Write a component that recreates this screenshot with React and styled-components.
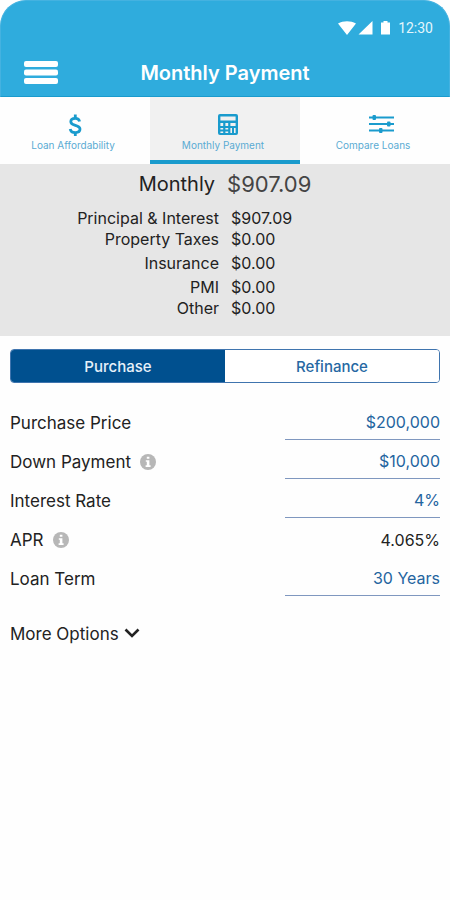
import React, { useState } from "react";
import styled, { createGlobalStyle } from "styled-components";

const GlobalStyle = createGlobalStyle`
  *, *::before, *::after { box-sizing: border-box; }
  body {
    margin: 0;
    background: #fff;
    color: #222;
    font-family: Inter, Roboto, "Liberation Sans", sans-serif;
    font-size: 16px;
  }
  button, input, select { font: inherit; color: inherit; margin: 0; }
`;

const Screen = styled.div`
  min-height: 100vh;
  background: #fefefe;
`;

const Header = styled.header`
  background: #2facdd;
  border: 1px solid #44b2e0;
  border-bottom: 1px solid #1a9bcd;
  border-radius: 26px 26px 0 0;
`;

const StatusBar = styled.div`
  display: flex;
  align-items: center;
  justify-content: flex-end;
  height: 48px;
  padding: 6px 16px 0 0;
  color: #e4f6fc;
  font-family: Roboto, sans-serif;
  font-size: 14px;
`;

const StatusIcons = styled.svg`
  width: 54px;
  height: 16px;
  margin-right: 6px;
  fill: #fff;
`;

const TitleBar = styled.div`
  display: grid;
  grid-template-columns: 48px 1fr 48px;
  align-items: center;
  height: 47px;
  padding: 0 16px;
`;

const MenuButton = styled.button`
  display: flex;
  padding: 0 0 0 7px;
  border: 0;
  background: none;
  color: #fff;
  cursor: pointer;
`;

const Title = styled.h1`
  margin: 0;
  color: #fff;
  font-size: 20px;
  font-weight: 600;
  text-align: center;
`;

const Tabs = styled.nav`
  display: grid;
  grid-template-columns: repeat(3, 1fr);
  height: 67px;
`;

const Tab = styled.button`
  display: flex;
  flex-direction: column;
  align-items: center;
  padding: 16px 4px 0 0;
  border: 0;
  border-bottom: 4px solid ${(p) => (p.$active ? "#1a9bcd" : "transparent")};
  background: ${(p) => (p.$active ? "#f1f1f1" : "#fefefe")};
  color: #5aabd3;
  font-size: 10px;
  line-height: 12px;
  white-space: nowrap;
  cursor: pointer;
`;

const TabIcon = styled.svg`
  width: 48px;
  height: 26px;
  color: #1a9bcd;
`;

const Summary = styled.section`
  padding: 8px 0 18px;
  background: #e6e6e6;
`;

const Total = styled.div`
  display: flex;
  justify-content: center;
  align-items: center;
  gap: 12px;
  height: 24px;
  margin-bottom: 12px;
  font-size: 20px;
`;

const TotalValue = styled.strong`
  color: #444;
  font-size: 22px;
  font-weight: 400;
`;

const Breakdown = styled.dl`
  display: grid;
  grid-template-columns: 1fr 1fr;
  grid-template-rows: 20px 22px 26px 22px 20px;
  align-items: center;
  column-gap: 12px;
  margin: 0;
`;

const Label = styled.dt`
  text-align: right;
`;

const Value = styled.dd`
  margin: 0;
`;

const Form = styled.form`
  padding: 13px 10px 0;
`;

const Segments = styled.div`
  display: grid;
  grid-template-columns: 1fr 1fr;
  height: 34px;
  margin-bottom: 18px;
  overflow: hidden;
  border: 1px solid #3f74ae;
  border-radius: 4px;
`;

const Segment = styled.button`
  border: 0;
  background: ${(p) => (p.$active ? "#00508f" : "#fff")};
  color: ${(p) => (p.$active ? "#e6f1fa" : "#2668a3")};
  font-size: 15px;
  font-weight: 500;
  cursor: pointer;
`;

const Row = styled.div`
  display: flex;
  align-items: center;
  justify-content: space-between;
  height: 39px;
`;

const FieldName = styled.div`
  display: flex;
  align-items: center;
  gap: 9px;
  padding-top: 4px;
  font-size: 17px;
`;

const Info = styled.button`
  display: flex;
  padding: 0;
  border: 0;
  background: none;
  cursor: pointer;
`;

const Field = styled.input`
  width: 36%;
  height: 39px;
  padding: 4px 0 0;
  border: 0;
  border-bottom: 1px solid #7f97bf;
  border-radius: 0;
  outline: 0;
  background: none;
  color: #24649f;
  text-align: right;
`;

const SelectField = styled(Field)`
  appearance: none;
  text-align-last: right;
`;

const Output = styled.output`
  padding-top: 4px;
`;

const More = styled.button`
  display: flex;
  align-items: center;
  gap: 5px;
  margin-top: 28px;
  padding: 0;
  border: 0;
  background: none;
  font-size: 17px;
  cursor: pointer;
`;

function InfoButton({ label }) {
  return (
    <Info type="button" aria-label={label}>
      <svg width="16" height="16" viewBox="0 0 16 16">
        <circle cx="8" cy="8" r="8" fill="#b7b7b7" />
        <path d="M6.8 2.8h2.6v2H6.8zM5.8 6.2h3.6v5h1.2v1.7H5.6v-1.7h1.2V7.8h-1z" fill="#fff" />
      </svg>
    </Info>
  );
}

const drawings = {
  dollar: (
    <g fill="none" stroke="currentColor" strokeWidth="2.8">
      <path d="M30.6 8.6C30.200 6.600 28.600 5.400 26.200 5.400c-2.800 0-4.400 1.400-4.400 3.300 0 4.700 9.200 2.500 9.200 7.400 0 2.300-1.900 3.500-4.600 3.500-2.900 0-4.800-1.300-5.200-3.700" />
      <path d="M26.300 1.500v4M26.300 19.400v3.600" />
    </g>
  ),
  calculator: (
    <g>
      <rect x="19" y="1" width="20" height="21" rx="2" fill="currentColor" />
      <path d="M21.4 3.400h15.200v4.200H21.400zM21.400 10h2.800v3h-2.800zM26.400 10h2.800v3h-2.800zM31.400 10h5.200v3h-5.200zM21.400 15h2.800v1.600h-2.800zM26.400 15h2.800v1.600h-2.800zM21.400 18.400h2.800V20h-2.800zM26.400 18.400h2.800V20h-2.800zM31.400 15H33v5h-1.600zM35 15h1.600v5H35z" fill="#f1f1f1" />
    </g>
  ),
  sliders: (
    <g stroke="currentColor" strokeWidth="2" fill="currentColor">
      <path d="M20 4.5h25M20 11h25M20 17.500h25" />
      <g stroke="none">
        <rect x="23.500" y="2" width="3.500" height="5" rx="1" />
        <rect x="38" y="8.500" width="3.500" height="5" rx="1" />
        <rect x="30" y="15" width="3.500" height="5" rx="1" />
      </g>
    </g>
  ),
};

const tabs = [
  { name: "Loan Affordability", icon: "dollar" },
  { name: "Monthly Payment", icon: "calculator" },
  { name: "Compare Loans", icon: "sliders" },
];

const costs = [
  ["Principal & Interest", "$907.09"],
  ["Property Taxes", "$0.00"],
  ["Insurance", "$0.00"],
  ["PMI", "$0.00"],
  ["Other", "$0.00"],
];

export default function App() {
  const [tab, setTab] = useState("Monthly Payment");
  const [mode, setMode] = useState("Purchase");
  return (
    <Screen>
      <GlobalStyle />
      <Header>
        <StatusBar>
          <StatusIcons viewBox="0 0 54 16" aria-hidden="true">
            <path d="M0 3.4C5.4.6 12.6.6 18 3.4L9 15zM34.5 1v13.5H20.5zM43 2.500h2.500V1h4v1.500H52v12h-9z" />
          </StatusIcons>
          12:30
        </StatusBar>
        <TitleBar>
          <MenuButton aria-label="Menu">
            <svg width="34" height="24" viewBox="0 0 34 24" fill="currentColor">
              <rect y="0" width="34" height="6" rx="2" />
              <rect y="8.5" width="34" height="6" rx="2" />
              <rect y="17" width="34" height="6" rx="2" />
            </svg>
          </MenuButton>
          <Title>Monthly Payment</Title>
        </TitleBar>
      </Header>
      <Tabs>
        {tabs.map((t) => (
          <Tab key={t.name} $active={tab === t.name} onClick={() => setTab(t.name)}>
            <TabIcon viewBox="0 0 48 26" aria-hidden="true">{drawings[t.icon]}</TabIcon>
            {t.name}
          </Tab>
        ))}
      </Tabs>
      <Summary>
        <Total>
          Monthly <TotalValue>$907.09</TotalValue>
        </Total>
        <Breakdown>
          {costs.map(([name, amount]) => (
            <React.Fragment key={name}>
              <Label>{name}</Label>
              <Value>{amount}</Value>
            </React.Fragment>
          ))}
        </Breakdown>
      </Summary>
      <Form>
        <Segments>
          {["Purchase", "Refinance"].map((m) => (
            <Segment key={m} type="button" $active={mode === m} onClick={() => setMode(m)}>
              {m}
            </Segment>
          ))}
        </Segments>
        <Row>
          <FieldName><label htmlFor="price">Purchase Price</label></FieldName>
          <Field id="price" defaultValue="$200,000" />
        </Row>
        <Row>
          <FieldName>
            <label htmlFor="down">Down Payment</label>
            <InfoButton label="About down payment" />
          </FieldName>
          <Field id="down" defaultValue="$10,000" />
        </Row>
        <Row>
          <FieldName><label htmlFor="rate">Interest Rate</label></FieldName>
          <Field id="rate" defaultValue="4%" />
        </Row>
        <Row>
          <FieldName>
            <label htmlFor="apr">APR</label>
            <InfoButton label="About APR" />
          </FieldName>
          <Output id="apr">4.065%</Output>
        </Row>
        <Row>
          <FieldName><label htmlFor="term">Loan Term</label></FieldName>
          <SelectField as="select" id="term" defaultValue="30 Years">
            <option>30 Years</option>
            <option>15 Years</option>
          </SelectField>
        </Row>
        <More type="button">
          More Options
          <svg width="16" height="16" viewBox="0 0 16 16" fill="none" stroke="currentColor" strokeWidth="2.6">
            <path d="M1.5 3.500L8 10l6.500-6.500" />
          </svg>
        </More>
      </Form>
    </Screen>
  );
}
